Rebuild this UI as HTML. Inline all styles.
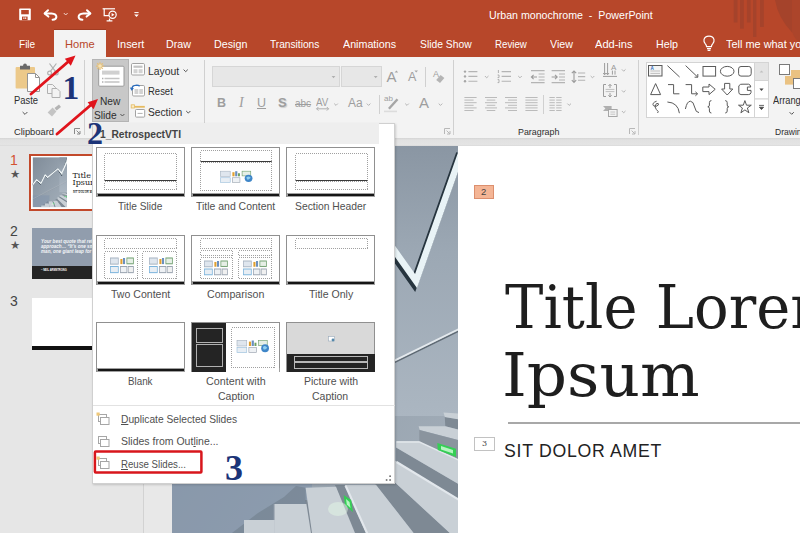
<!DOCTYPE html>
<html>
<head>
<meta charset="utf-8">
<title>Urban monochrome - PowerPoint</title>
<style>
html,body{margin:0;padding:0;}
body{width:800px;height:533px;overflow:hidden;position:relative;background:#e6e6e6;font-family:"Liberation Sans","DejaVu Sans",sans-serif;font-size:11px;color:#444;}
.abs{position:absolute;}
svg{position:absolute;left:0;top:0;overflow:visible;}
.t{position:absolute;white-space:nowrap;line-height:14px;font-size:11px;color:#2e2e2e;transform-origin:0 50%;}
.w{color:#fff;}
.c{text-align:center;}
.num{position:absolute;font-family:"Liberation Serif","DejaVu Serif",serif;font-weight:bold;color:#1c3478;font-size:32px;line-height:32px;white-space:nowrap;}
u{text-decoration:underline;}
</style>
</head>
<body>

<!-- ============ slide editing area ============ -->
<div class="abs" style="left:172px;top:145.500px;width:628px;height:388px;background:#fff;"></div>
<svg width="800" height="533" viewBox="0 0 800 533">
<defs>
<linearGradient id="wall" x1="0" y1="0" x2="1" y2="1"><stop offset="0" stop-color="#7f8b98"/><stop offset="0.5" stop-color="#94a0ac"/><stop offset="1" stop-color="#a4afba"/></linearGradient>
<clipPath id="pc"><rect x="172" y="145.600" width="286" height="388"/></clipPath>
<linearGradient id="wallr" x1="0" y1="0" x2="0" y2="1"><stop offset="0" stop-color="#8a96a3"/><stop offset="0.4" stop-color="#9ca8b4"/><stop offset="1" stop-color="#abb6c1"/></linearGradient>
</defs>
<g clip-path="url(#pc)"><g id="photo">

<!-- wall shading -->
<rect x="172" y="145" width="286" height="388" fill="url(#wall)"/>
<rect x="395" y="145" width="63" height="271" fill="url(#wallr)"/>
<rect x="172" y="440" width="140" height="93" fill="#8194ab" opacity=".55"/>
<!-- V chart line -->
<path d="M166 359 L205 321 L241 349 L276 283 L297 302 L382 233 L416 281 L462 151" stroke="#26343e" stroke-width="8" fill="none" stroke-linejoin="miter" transform="translate(-2 2.500)"/>
<path d="M166 359 L205 321 L241 349 L276 283 L297 302 L382 233 L416 281 L462 151" stroke="#e9f3f6" stroke-width="6.500" fill="none" stroke-linejoin="miter"/>
<!-- handrail -->
<path d="M172 470.500 L459 330" stroke="#5f6a74" stroke-width="1.600" fill="none" transform="translate(0 .8)"/>
<path d="M172 469.500 L459 329" stroke="#e4e9ed" stroke-width="1.900" fill="none"/>
<!-- stairs risers -->
<g fill="#7e8994">
<path d="M444.800 417 L460 419.500 L460 430 L445.300 426.200Z"/>
<path d="M396.100 447.400 L460 484.900 L460 499.900 L396.100 461.200Z"/>
<path d="M360 470 L380 468 L396.100 483.600 L449.800 533 L413.600 533 L376.100 484.900Z"/>
<path d="M334.900 484.900 L344.900 484.900 L366.100 533 L353.700 533Z"/>
<path d="M305 500 L307.500 500 L313 533 L310 533Z"/>

</g>
<path d="M296 486 L305.600 487.700 L305.600 504 L274.800 504 L274.800 520 L244 520 L244 533 L232 533 L258 513 L284 497Z" fill="#6c7986" opacity=".5"/>
<path d="M274.300 504 V533" stroke="#aab3bc" stroke-width="1"/>
<g fill="#c9d0d6">
<path d="M443.500 412.500 L460 413.700 L460 419.500 L444.800 417Z"/>
<path d="M418.600 426.200 L445.300 426.200 L460 430 L460 440.400 L419.800 430Z"/>
<path d="M396.100 441.200 L419.300 441.200 L460 460 L460 484.900 L396.100 447.400Z"/>
<path d="M380 452 L396.100 461.200 L460 499.900 L460 533 L449.800 533 L396.100 483.600 L380 470Z"/>
<path d="M344.900 484.900 L376.100 484.900 L413.600 533 L366.100 533Z"/>
<path d="M305.600 487.700 L336 486.800 L355 533 L312 533Z"/>
<path d="M274.800 504 L306.400 504 L311 533 L274.800 533Z"/>
<path d="M244 520 L274.800 520 L274.800 533 L244 533Z"/>
</g>
<path d="M419.300 430 L460 440.400 L460 460 L419.300 442Z" fill="#8a949e"/>
<g stroke="#e2e7ec" stroke-width="2.200" fill="none">
<path d="M345.500 485.500 L367.500 534"/><path d="M396.500 462 L460 500.500"/><path d="M396.500 442 L419.500 442 L460 460.600" stroke-width="1.400"/>
</g>
<!-- green lights -->
<path d="M437.300 443 L456 448.700 L456 457 L437.800 450Z" fill="#35cf55"/>
<path d="M441 446 L453 450 L453 453.500 L441 449.500Z" fill="#b4f5c0"/>
<path d="M343.700 494.900 L351.200 499.900 L352.900 512.300 L344.900 504.800Z" fill="#35cf55"/>
<path d="M346 499 L349.500 502 L350.500 508 L346.800 504.500Z" fill="#b4f5c0"/>
<ellipse cx="338" cy="509" rx="10" ry="7" fill="#e4f8e6" opacity=".5"/>

</g></g>
</svg>

<!-- ============ left thumbnail panel ============ -->
<div class="abs" style="left:0;top:145.500px;width:143px;height:388px;background:#e6e6e6;"></div>
<div class="abs" style="left:143px;top:145.500px;width:1px;height:388px;background:#d2d2d2;"></div>
<div class="abs" style="left:144px;top:145.500px;width:28px;height:388px;background:#e8e8e8;"></div>

<div class="t" style="left:10px;top:151px;font-size:14px;line-height:18px;color:#d35230;">1</div>
<div class="t" style="left:10px;top:222px;font-size:14px;line-height:18px;color:#444;">2</div>
<div class="t" style="left:10px;top:292px;font-size:14px;line-height:18px;color:#444;">3</div>

<!-- slide 1 thumb -->
<div class="abs" style="left:29px;top:154px;width:70px;height:57px;box-sizing:border-box;border:2px solid #c2492b;background:#fff;"></div>
<svg width="100" height="220" viewBox="0 0 100 220"><defs><clipPath id="pc2"><rect x="32.600" y="157.300" width="34.400" height="50"/></clipPath></defs>
<g clip-path="url(#pc2)"><use href="#photo" transform="translate(32.600 157.300) scale(0.1203 0.1292) translate(-172 -146)"/>
<path d="M32.600 184.800 L36.600 179.900 L40.900 183.500 L45.100 175 L47.600 177.400 L57.900 168.900 L61.600 173.200 L67 161.600" stroke="#f2f7f9" stroke-width="1.100" fill="none"/></g></svg>
<div class="t" style="left:72.500px;top:171.600px;font-family:'DejaVu Serif','Liberation Serif',serif;font-size:8px;line-height:7.600px;color:#222;">Title<br>Ipsum</div>
<div class="abs" style="left:73px;top:190px;width:30px;height:1px;background:#b4b4b4;"></div>
<div class="t" style="left:73px;top:191.400px;font-size:2.600px;line-height:4px;color:#333;letter-spacing:.2px;font-weight:bold;">SIT DOLOR AMET</div>
<!-- slide 2 thumb -->
<div class="abs" style="left:32px;top:228px;width:70px;height:37.500px;background:#919dad;"></div>
<div class="abs" style="left:32px;top:265.500px;width:70px;height:13.500px;background:#242424;"></div>
<div class="t w" style="left:41px;top:240.400px;font-size:4.600px;line-height:4.700px;font-style:italic;font-weight:bold;color:#f4f6f8;">Your best quote that reflects your<br>approach… “It’s one small step for<br>man, one giant leap for mankind.”</div>
<div class="t w" style="left:41px;top:269.400px;font-size:2.600px;line-height:4px;font-weight:bold;color:#fff;">– NEIL ARMSTRONG</div>
<div class="t" style="left:10px;top:167.500px;font-size:11.500px;line-height:12px;color:#555;font-family:'DejaVu Sans',sans-serif;">★</div>
<div class="t" style="left:10px;top:238.500px;font-size:11.500px;line-height:12px;color:#555;font-family:'DejaVu Sans',sans-serif;">★</div>
<!-- slide 3 thumb -->
<div class="abs" style="left:32px;top:298.400px;width:70px;height:48px;background:#fff;"></div>
<div class="abs" style="left:32px;top:346px;width:70px;height:3.600px;background:#111;"></div>

<!-- ============ title bar + tabs ============ -->
<div class="abs" style="left:0;top:0;width:800px;height:56.500px;background:#b7472a;"></div>
<div class="abs" style="left:54px;top:30.200px;width:51.500px;height:27px;background:#f3f3f3;box-shadow:0 -1px 0 rgba(120,40,20,.35);"></div>
<div class="abs" style="left:0;top:56.500px;width:800px;height:81.500px;background:#f3f3f3;"></div>
<div class="abs" style="left:0;top:138px;width:800px;height:7.500px;background:linear-gradient(#d4d4d4,#e1e1e1 25%,#e4e4e4 80%,#dadada);"></div>

<div class="t" id="ttl" style="left:488.8px;top:6.8px;font-size:11px;line-height:16px;color:#fff;transform:scaleX(0.9666);">Urban monochrome &nbsp;-&nbsp; PowerPoint</div>
<div class="t" id="tb1" style="left:18.6px;top:36.0px;font-size:11px;line-height:16px;color:#fff;transform:scaleX(0.9135);">File</div>
<div class="t" id="tb2" style="left:64.8px;top:36.0px;font-size:11px;line-height:16px;color:#b7472a;transform:scaleX(1.0121);">Home</div>
<div class="t" id="tb3" style="left:117.0px;top:36.0px;font-size:11px;line-height:16px;color:#fff;transform:scaleX(0.9958);">Insert</div>
<div class="t" id="tb4" style="left:166.4px;top:36.0px;font-size:11px;line-height:16px;color:#fff;transform:scaleX(0.9738);">Draw</div>
<div class="t" id="tb5" style="left:214.0px;top:36.0px;font-size:11px;line-height:16px;color:#fff;transform:scaleX(0.9752);">Design</div>
<div class="t" id="tb6" style="left:270.1px;top:36.0px;font-size:11px;line-height:16px;color:#fff;transform:scaleX(0.9234);">Transitions</div>
<div class="t" id="tb7" style="left:343.0px;top:36.0px;font-size:11px;line-height:16px;color:#fff;transform:scaleX(0.9739);">Animations</div>
<div class="t" id="tb8" style="left:420.0px;top:36.0px;font-size:11px;line-height:16px;color:#fff;transform:scaleX(0.9374);">Slide Show</div>
<div class="t" id="tb9" style="left:495.2px;top:36.0px;font-size:11px;line-height:16px;color:#fff;transform:scaleX(0.8814);">Review</div>
<div class="t" id="tb10" style="left:549.6px;top:36.0px;font-size:11px;line-height:16px;color:#fff;transform:scaleX(0.9680);">View</div>
<div class="t" id="tb11" style="left:594.8px;top:36.0px;font-size:11px;line-height:16px;color:#fff;transform:scaleX(1.0054);">Add-ins</div>
<div class="t" id="tb12" style="left:655.5px;top:36.0px;font-size:11px;line-height:16px;color:#fff;transform:scaleX(0.9724);">Help</div>
<div class="t" id="tb13" style="left:726.4px;top:36.0px;font-size:11px;line-height:16px;color:#fff;transform:scaleX(0.9928);">Tell me what y<span>ou want to do</span></div>
<!-- ============ ribbon text ============ -->
<div class="abs" style="left:92px;top:59px;width:37px;height:63px;box-sizing:border-box;background:#c8c8c8;border:1px solid #b4b4b4;"></div>

<div class="t" id="r1" style="left:13.7px;top:92.6px;font-size:10.4px;line-height:16px;transform:scaleX(0.9068);">Paste</div>
<div class="t" id="r2" style="left:14.4px;top:124.0px;font-size:9.6px;line-height:16px;transform:scaleX(0.9738);">Clipboard</div>
<div class="t" id="r3" style="left:99.6px;top:93.8px;font-size:10.4px;line-height:16px;transform:scaleX(0.9809);">New</div>
<div class="t" id="r4" style="left:93.7px;top:107.8px;font-size:10.4px;line-height:16px;transform:scaleX(0.9823);">Slide</div>
<div class="t" id="r5" style="left:147.8px;top:63.6px;font-size:10.4px;line-height:16px;transform:scaleX(0.9999);">Layout</div>
<div class="t" id="r6" style="left:147.8px;top:84.2px;font-size:10.4px;line-height:16px;transform:scaleX(0.9132);">Reset</div>
<div class="t" id="r7" style="left:147.8px;top:104.8px;font-size:10.4px;line-height:16px;transform:scaleX(0.9835);">Section</div>
<div class="t" id="r8" style="left:518.2px;top:124.2px;font-size:9.6px;line-height:16px;transform:scaleX(0.9238);">Paragraph</div>
<div class="t" id="r9" style="left:772.7px;top:92.6px;font-size:10.4px;line-height:16px;transform:scaleX(0.8900);">Arrang<span>e</span></div>
<div class="t" id="r10" style="left:774.6px;top:123.8px;font-size:9.6px;line-height:16px;transform:scaleX(0.8900);">Drawin<span>g</span></div>
<!-- font boxes -->
<div class="abs" style="left:212px;top:66px;width:128px;height:21px;box-sizing:border-box;background:#e7e7e7;border:1px solid #d6d6d6;"></div>
<div class="abs" style="left:341px;top:66px;width:41px;height:21px;box-sizing:border-box;background:#e7e7e7;border:1px solid #d6d6d6;"></div>

<!-- font buttons (disabled) -->
<div class="t" style="left:217px;top:96px;font-size:12.5px;font-weight:bold;color:#9e9e9e;">B</div>
<div class="t" style="left:239px;top:96px;font-size:12.5px;font-style:italic;font-family:'Liberation Serif',serif;color:#9e9e9e;font-size:14px;">I</div>
<div class="t" style="left:257px;top:96px;font-size:12.5px;color:#9e9e9e;text-decoration:underline;">U</div>
<div class="t" style="left:278px;top:96px;font-size:13px;font-weight:bold;color:#9e9e9e;text-shadow:1px 1px 1px #ccc;">S</div>
<div class="t" style="left:295px;top:97px;font-size:10px;color:#9e9e9e;text-decoration:line-through;">abc</div>
<div class="t" style="left:316px;top:94.500px;font-size:10.500px;color:#9e9e9e;transform:scaleX(.93);">AV</div>
<div class="t" style="left:348px;top:96px;font-size:12px;color:#9e9e9e;">Aa</div>
<div class="t" style="left:386.500px;top:69.500px;font-size:15px;color:#9e9e9e;">A</div>
<div class="t" style="left:408px;top:70px;font-size:12.5px;color:#9e9e9e;">A</div>
<div class="t" style="left:433px;top:67px;font-size:9px;color:#9e9e9e;">A</div>
<div class="t" style="left:384px;top:92px;font-size:8px;color:#9e9e9e;">ab</div>
<div class="t" style="left:419px;top:96px;font-size:15px;color:#9e9e9e;">A</div>
<div class="t" style="left:611px;top:61px;font-size:8px;color:#999;">A</div>

<!-- ============ ribbon / titlebar icons ============ -->
<svg width="800" height="146" viewBox="0 0 800 146" fill="none">
<!-- title bar decoration -->
<g fill="#a5432b">
<rect x="733.7" y="0" width="3.8" height="22.5"/>
<rect x="740" y="0" width="3.8" height="28.7"/>
<rect x="746.9" y="0" width="3.8" height="22.5"/>
<rect x="753" y="0" width="3.4" height="37"/>
<rect x="760" y="0" width="3.8" height="27"/>
<path d="M775 0 L792.5 0 L792.5 33 Q778 18 775 0Z"/>
</g>
<path d="M792.5 0 H800 V42 Q795 40 792.5 33Z" fill="#ac452b"/>
<!-- save -->
<rect x="19.200" y="8.600" width="11.600" height="11.600" rx=".8" fill="#fff"/>
<rect x="21.200" y="10" width="7.600" height="4.300" fill="#b7472a"/>
<rect x="22" y="16.600" width="5.600" height="3.600" fill="#b7472a"/>
<rect x="23.400" y="17.300" width="1" height="1.700" fill="#fff"/><rect x="25.200" y="17.300" width="1" height="1.700" fill="#fff"/>
<!-- undo -->
<g stroke="#fff" stroke-width="2" stroke-linecap="round" stroke-linejoin="round">
<path d="M48 10.2 L44.6 13.4 L48.4 16.6"/>
<path d="M45 13.4 H51.5 Q56.4 13.6 56.4 17 Q56.2 19.6 52.6 19.8"/>
<path d="M87 10.2 L90.4 13.4 L86.6 16.6"/>
<path d="M90 13.4 H83.5 Q78.6 13.6 78.6 17 Q78.8 19.6 82.4 19.8"/>
</g>
<path d="M63.8 13 L65.7 15 L67.6 13" stroke="#f3d4cb" stroke-width="1"/>
<!-- present from beginning -->
<g stroke="#fff" stroke-width="1.2">
<path d="M102.6 8.8 H115"/>
<path d="M104.2 8.8 V15.6 H109"/>
<path d="M106.6 20.8 H112.4 M109.5 18.6 V20.8"/>
<circle cx="112.6" cy="14.8" r="3.6"/>
</g>
<path d="M111.6 13 L114.4 14.8 L111.6 16.6Z" fill="#fff"/>
<!-- customize qat -->
<path d="M134.4 12.6 H138.6" stroke="#fff" stroke-width="1"/>
<path d="M134.2 14.4 H138.8 L136.5 17Z" fill="#fff"/>
<!-- bulb -->
<g stroke="#fff" stroke-width="1.2">
<path d="M706.6 46.6 Q706.4 45 705.2 43.6 Q703.6 41.6 704 39.6 Q704.8 36.2 709 36.2 Q713.2 36.2 714 39.6 Q714.4 41.6 712.8 43.6 Q711.6 45 711.4 46.6 Z"/>
<path d="M707 48.6 H711 M707.6 50.4 H710.4"/>
</g>

<!-- group separators -->
<g stroke="#d0d0d0" stroke-width="1">
<path d="M84.5 60 V135"/>
<path d="M204.5 60 V135"/>
<path d="M453.5 60 V135"/>
<path d="M638.5 60 V135"/>
<path d="M379.5 95 V114"/>
<path d="M425.5 67 V87"/>
<path d="M543.5 95 V114"/>
</g>

<!-- paste icon -->
<rect x="15.600" y="67" width="19.400" height="21.500" rx="1" fill="#ecc98a"/>
<path d="M20 67.5 V65.8 H23 Q23.2 63.6 25 63.6 Q26.8 63.6 27 65.8 H30 V69.4 H20Z" fill="#6a6a6a"/>
<path d="M27.5 73.5 H35.5 L39.5 77.5 V91.5 H27.5Z" fill="#fff" stroke="#959595" stroke-width="1"/>
<path d="M35.500 73.500 V77.500 H39.500" stroke="#959595" stroke-width="1"/>
<path d="M22.6 112 L25 114.4 L27.4 112" stroke="#555" stroke-width="1"/>
<!-- scissors -->
<g stroke="#b0b0b0" stroke-width="1.2">
<path d="M49.5 63.5 L55.4 71.4 M56.4 63.5 L50.4 71.4"/>
<circle cx="49.6" cy="73" r="1.9"/><circle cx="56.2" cy="73" r="1.9"/>
</g>
<!-- copy -->
<g stroke="#b0b0b0" stroke-width="1" fill="#f3f3f3">
<path d="M47.5 84.5 H52.5 L55.5 87.5 V93.5 H47.5Z"/>
<path d="M52 88.5 H57 L60 91.5 V97.5 H52Z"/>
</g>
<!-- format painter -->
<g fill="#b4b4b4">
<path d="M54.5 108 L59 104.6 L61 107 L56.6 110.6Z"/>
<path d="M47.6 112.4 L52.6 107.6 L56.4 111.6 L52 116.6Z" fill="#c4c4c4"/>
</g>
<!-- launchers -->
<g stroke="#8a8a8a" stroke-width="1">
<path d="M74.5 134 V128.5 H80"/><path d="M76.6 130.6 L80 134 M80 131 V134 H77"/>
</g>
<g stroke="#b8b8b8" stroke-width="1">
<path d="M444.5 134 V128.5 H450"/><path d="M446.6 130.6 L450 134 M450 131 V134 H447"/>
<path d="M629.5 134 V128.5 H635"/><path d="M631.6 130.6 L635 134 M635 131 V134 H632"/>
</g>

<!-- new slide icon -->
<rect x="98.700" y="66.200" width="25.300" height="20" rx="1" fill="#fff" stroke="#9a9a9a"/>
<rect x="102" y="70.600" width="17.500" height="4" fill="#d0d0d0"/>
<path d="M104.500 78.500 H119.500 M104.500 82 H119.500" stroke="#c4c4c4" stroke-width="1.300"/><path d="M102 78.500 H103.400 M102 82 H103.400" stroke="#b0b0b0" stroke-width="1.300"/>
<g stroke="#e6c078" stroke-width="1.300"><path d="M100 62.200 V70 M96 66.100 H104 M97.200 63.300 L102.800 68.900 M102.800 63.300 L97.200 68.900"/></g>
<circle cx="100" cy="66" r="1.8" fill="#f6e3b8"/>
<path d="M120.4 114 L122.4 116 L124.4 114" stroke="#555" stroke-width="1"/>

<!-- layout icon -->
<rect x="131.500" y="63.500" width="13" height="11.500" rx="1.200" fill="#fff" stroke="#a2a2a2"/>
<rect x="133.500" y="65.600" width="9" height="2.200" fill="#c4c4c4"/>
<rect x="133.500" y="69.200" width="4" height="4" fill="#d2d2d2"/><rect x="138.600" y="69.200" width="4" height="4" fill="#d2d2d2"/>
<path d="M183.600 69.600 L185.700 71.700 L187.800 69.600" stroke="#555" stroke-width="1"/>
<!-- reset icon -->
<rect x="132.500" y="85.500" width="12" height="10.500" rx="1.200" fill="#fff" stroke="#a2a2a2"/>
<rect x="134.500" y="89" width="3.800" height="5" fill="#d2d2d2"/><rect x="139.300" y="89" width="3.600" height="5" fill="#d2d2d2"/>
<path d="M131.600 89.600 Q131.800 85.400 136.800 85.200 Q138.600 85.200 139.600 86.200" stroke="#2a6dbf" stroke-width="1.300" fill="none"/>
<path d="M129.800 87.600 L131.600 90.800 L134 88.200Z" fill="#2a6dbf"/>
<!-- section icon -->
<rect x="131.200" y="104.800" width="3.200" height="3.200" fill="#f9ecc8" stroke="#e6bb60" stroke-width=".8"/>
<path d="M134.600 106.800 H144.800" stroke="#e6bb60" stroke-width="1.800"/>
<rect x="135.500" y="109.500" width="9.200" height="7.600" rx=".8" fill="#fff" stroke="#a2a2a2"/>
<path d="M137.600 113.400 H142.600" stroke="#b0b0b0" stroke-width="1"/>
<path d="M186.200 111 L188.300 113.100 L190.400 111" stroke="#555" stroke-width="1"/>

<!-- combo arrows -->
<path d="M331.6 76 H335.4 L333.5 78.2Z M373.8 76 H377.6 L375.7 78.2Z" fill="#b0b0b0"/>
<!-- disabled chevrons -->
<g stroke="#b4b4b4" stroke-width="1">
<path d="M334.2 103.6 L336 105.4 L337.8 103.6"/>
<path d="M366.8 103.6 L368.6 105.4 L370.4 103.6"/>
<path d="M405.2 103.6 L407 105.4 L408.8 103.6"/>
<path d="M438.7 103.6 L440.5 105.4 L442.3 103.6"/>
<path d="M484.9 76 L486.7 77.8 L488.5 76"/>
<path d="M518.2 76 L520 77.8 L521.8 76"/>
<path d="M590.7 76 L592.5 77.8 L594.3 76"/>
<path d="M567.4 103.6 L569.2 105.4 L571 103.6"/>
<path d="M621.9 69.4 L623.7 71.2 L625.5 69.4"/>
<path d="M621.9 90.4 L623.7 92.2 L625.5 90.4"/>
<path d="M621.9 111 L623.7 112.8 L625.5 111"/>
</g>
<!-- AV arrow -->
<path d="M316.600 108.800 H328.600 M318.400 107 L316.600 108.800 L318.400 110.600 M326.800 107 L328.600 108.800 L326.800 110.600" stroke="#b0b0b0" stroke-width="1"/>
<!-- grow/shrink marks -->
<path d="M394.6 72.6 L396.4 70.4 L398.2 72.6Z" fill="#a6a6a6"/>
<path d="M414.4 70.4 L416.2 72.6 L418 70.4Z" fill="#a6a6a6"/>
<!-- clear formatting eraser -->
<path d="M436.2 80 L440.6 75 L444.4 78 L440 83Z" fill="#b4b4b4"/>
<!-- highlighter -->
<path d="M388 108 L396.6 98.4 L398.4 100 L389.8 109.4Z" fill="#a6a6a6"/>
<path d="M384 111.4 H397" stroke="#dcdcdc" stroke-width="1.6"/>

<!-- bullets -->
<g fill="#a6a6a6"><circle cx="465" cy="71.6" r="1.2"/><circle cx="465" cy="76.4" r="1.2"/><circle cx="465" cy="81.2" r="1.2"/></g>
<g stroke="#b4b4b4" stroke-width="1.1">
<path d="M468.4 71.6 H477.4 M468.4 76.4 H477.4 M468.4 81.2 H477.4"/>
<!-- numbering -->
<path d="M501.6 71.6 H511 M501.6 76.4 H511 M501.6 81.2 H511"/>
<path d="M498.4 70 V73 M497.6 75 H499 V77.6 H497.6 M497.6 79.6 H499 V82.6 H497.6" stroke-width=".8" stroke="#a0a0a0"/>
<!-- decrease indent -->
<path d="M531 70.6 H544.6 M538.6 74 H544.6 M538.6 77 H544.6 M538.6 80 H544.6 M531 82.6 H544.6"/>
<path d="M531.4 77 H537 M533.6 74.8 L531.4 77 L533.6 79.2" stroke="#9c9c9c"/>
<!-- increase indent -->
<path d="M551.6 70.6 H565 M559 74 H565 M559 77 H565 M559 80 H565 M551.6 82.6 H565"/>
<path d="M551.6 77 H557.2 M555 74.8 L557.2 77 L555 79.2" stroke="#9c9c9c"/>
<!-- line spacing -->
<path d="M578 73 H585.2 M578 76.6 H585.2 M578 80.2 H585.2"/>
<path d="M574 71 V82.4 M571.8 73.2 L574 71 L576.2 73.2 M571.8 80.2 L574 82.4 L576.2 80.2" stroke="#9c9c9c"/>
<!-- align left/center/right/justify -->
<path stroke-width=".9" d="M464.4 97.5 H476.6 M464.4 100.1 H473.6 M464.4 102.7 H476.6 M464.4 105.3 H473.6 M464.4 107.9 H476.6 M464.4 110.5 H473.6"/>
<path stroke-width=".9" d="M485.0 97.5 H497.0 M486.7 100.1 H495.3 M485.0 102.7 H497.0 M486.7 105.3 H495.3 M485.0 107.9 H497.0 M486.7 110.5 H495.3"/>
<path stroke-width=".9" d="M505.0 97.5 H517.0 M508.0 100.1 H517.0 M505.0 102.7 H517.0 M508.0 105.3 H517.0 M505.0 107.9 H517.0 M508.0 110.5 H517.0"/>
<path stroke-width=".9" d="M525.4 97.5 H537.6 M525.4 100.1 H537.6 M525.4 102.7 H537.6 M525.4 105.3 H537.6 M525.4 107.9 H537.6 M525.4 110.5 H537.6"/>
<!-- columns -->
<path stroke-width=".9" d="M549.4 97.5 H554.8 M549.4 100.1 H554.8 M549.4 102.7 H554.8 M549.4 105.3 H554.8 M549.4 107.9 H554.8 M549.4 110.5 H554.8 M556.2 97.5 H561.6 M556.2 100.1 H561.6 M556.2 102.7 H561.6 M556.2 105.3 H561.6 M556.2 107.9 H561.6 M556.2 110.5 H561.6"/>
</g>
<!-- text direction -->
<g stroke="#9c9c9c" stroke-width="1">
<path d="M604.6 63 V74.6 M607.6 63 V74.6 M603 76.4 H617"/>
<path d="M603.2 73 L604.6 74.8 L606 73 M606.2 73 L607.6 74.8 L609 73"/>
<path d="M612.4 70.6 V74.6 M615 70.6 V74.6"/>
<!-- align text -->
<path d="M606 84.5 H603.5 V96.5 H606 M614 84.5 H616.5 V96.5 H614"/>
<path d="M610 84.4 V88 M608.4 86 L610 84.4 L611.6 86 M610 97 V93 M608.4 95.2 L610 97 L611.6 95.2"/>
<path d="M605.6 89.4 H614.4 M605.6 91.6 H614.4" stroke="#c0c0c0"/>
</g>
<!-- smartart -->
<path d="M603 106 H611.6 V111 H603 L605.4 108.5Z" fill="#b0b0b0"/>
<rect x="608.5" y="109.5" width="8.6" height="7" fill="#f3f3f3" stroke="#a6a6a6"/>
<path d="M610.4 112 H615.2 M610.4 114.2 H615.2" stroke="#c4c4c4" stroke-width="1"/>

<!-- SHAPES GALLERY -->
<rect x="646.5" y="62.5" width="122" height="55" fill="#fff" stroke="#d4d4d4"/>
<rect x="754.5" y="62.5" width="14" height="18" fill="#e4e4e4" stroke="#d4d4d4"/>
<rect x="754.5" y="80.5" width="14" height="18.5" fill="#fff" stroke="#d4d4d4"/>
<rect x="754.5" y="99" width="14" height="18.5" fill="#fff" stroke="#d4d4d4"/>
<path d="M759.6 72.4 L761.5 70.4 L763.4 72.4Z" fill="#c0c0c0"/>
<path d="M759.4 88.6 H763.6 L761.5 91Z" fill="#444"/>
<path d="M759 105.4 H764 M759.4 107.2 H763.6 L761.5 109.6Z" fill="#444" stroke="#444" stroke-width=".8"/>
<g stroke="#5a5a5a" stroke-width="1">
<!-- row1 -->
<rect x="648.5" y="65.5" width="13.5" height="10.5" fill="#f4f4f4"/>
<path d="M650.4 71 H660 M650.4 73.4 H660" stroke="#c0c0c0"/>
<path d="M667.4 65.6 L679.6 77"/>
<path d="M685.6 65.6 L697.6 77 M697.8 74 V77.2 H694.6"/>
<rect x="703" y="66.5" width="12.6" height="9.6"/>
<ellipse cx="727.2" cy="71.3" rx="6.8" ry="4.9"/>
<rect x="738.6" y="66.5" width="12.6" height="9.6" rx="2.4"/>
<!-- row2 -->
<path d="M655.6 83.6 L660.6 94.6 H650.6Z"/>
<path d="M668 84.6 H673.6 V93.8 H679.4"/>
<path d="M685.6 84.6 H691.6 V93.8 H697.4 M695.4 91.8 L697.6 93.8 L695.4 95.8"/>
<path d="M702.8 87 H709 V84 L715.2 89.3 L709 94.6 V91.6 H702.8Z"/>
<path d="M724.6 83.4 H729.8 V89 H732.8 L727.2 95 L721.6 89 H724.6Z"/>
<path d="M738.8 85.8 Q740.4 83.6 743 84.2 H748.6 Q750.6 84.6 750.8 87 H747.4 V90.4 H751 V92.6 Q750.6 94.6 748.4 94.6 H741 Q738.8 94.4 738.8 92.2Z"/>
<!-- row3 -->
<path d="M656.6 101.2 Q651.6 103 653.4 105.6 Q656 107.6 658.4 105 Q659 102.6 656.4 103.6 Q653.4 106.6 656.4 109.6 Q659.4 111.6 657.6 113"/>
<path d="M667.4 102 Q678 102.6 679.4 113.2"/>
<path d="M685.400 109 Q687 101.200 690.400 101.200 Q693.400 101.200 694.600 107 Q695.800 112.800 699 112.600"/>
<path d="M711.4 100.6 Q709.4 100.6 709.4 102.6 V105 Q709.4 106.8 707.8 106.8 Q709.4 106.8 709.4 108.6 V111 Q709.4 113 711.4 113"/>
<path d="M725.2 100.6 Q727.2 100.6 727.2 102.6 V105 Q727.2 106.8 728.8 106.8 Q727.2 106.8 727.2 108.6 V111 Q727.2 113 725.2 113"/>
<path d="M744.9 100.6 L746.5 105.2 H751.3 L747.4 108 L748.9 112.8 L744.9 109.9 L740.9 112.8 L742.4 108 L738.5 105.2 H743.3Z"/>
</g>
<text x="650.6" y="70" font-family="Liberation Sans, sans-serif" font-size="4.6" font-weight="bold" fill="#2a6dbf">A</text>

<!-- arrange icon -->
<rect x="779.5" y="64.500" width="10" height="10" fill="#fff" stroke="#7a7a7a"/>
<rect x="785" y="76" width="8.6" height="8.6" fill="#eac282"/>
<rect x="791" y="70" width="9" height="8" fill="#eac282"/>
<rect x="793.5" y="78.500" width="10" height="10" fill="#fff" stroke="#7a7a7a"/>
<path d="M789.6 112.200 L791.7 114.300 L793.8 112.200" stroke="#555" stroke-width="1"/>
</svg>

<!-- ============ slide text ============ -->
<div class="abs" style="left:474px;top:185px;width:20px;height:14px;box-sizing:border-box;background:#f4b595;border:1px solid #dc8f6e;"></div>
<div class="t" style="left:481px;top:185px;font-size:9.500px;line-height:14px;color:#444;">2</div>
<div class="t" id="big1" style="left:505px;top:273.900px;font-family:'DejaVu Serif','Liberation Serif',serif;font-size:59px;line-height:68px;color:#1e1e1e;transform:scaleX(.976);">Title Lorem</div>
<div class="t" id="big2" style="left:502px;top:341.900px;font-family:'DejaVu Serif','Liberation Serif',serif;font-size:59px;line-height:68px;color:#1e1e1e;transform:scaleX(1.066);">Ipsum</div>
<div class="abs" style="left:508px;top:422px;width:292px;height:2px;background:#a8a8a8;"></div>
<div class="abs" style="left:474px;top:437px;width:21px;height:14px;box-sizing:border-box;background:#fff;border:1px solid #c2c2c2;"></div>
<div class="t" style="left:482px;top:437px;font-size:8px;line-height:14px;color:#444;font-family:'DejaVu Serif',serif;">3</div>
<div class="t" id="s1" style="left:503.6px;top:438.6px;font-size:17.5px;line-height:24px;color:#222;letter-spacing:.7px;transform:scaleX(1.0108);">SIT DOLOR AMET</div>

<!-- ============ dropdown menu ============ -->
<div class="abs" style="left:92px;top:122.500px;width:303.200px;height:361px;box-sizing:border-box;background:#fff;border:1px solid #d0d0d0;box-shadow:1px 1px 2px rgba(0,0,0,.16);"></div>
<div class="abs" style="left:93px;top:123px;width:286px;height:21px;background:#eeeeee;"></div>
<div class="abs" style="left:93px;top:405px;width:302px;height:1px;background:#e2e2e2;"></div>

<svg width="800" height="533" viewBox="0 0 800 533" fill="none">
<defs>
<g id="thumb"><rect x=".5" y=".5" width="88" height="49" fill="#fff" stroke="#909090"/><rect x="1" y="46" width="87" height="3.500" fill="#161616"/></g>
<g id="ico">
<rect x="0" y="0" width="9" height="5" fill="#dfe6ee" stroke="#a8b4c2" stroke-width=".6"/>
<rect x="0" y="6.4" width="9" height="4.600" fill="#e8eef4" stroke="#9cc0dc" stroke-width=".6"/>
<rect x="11" y="1" width="2" height="4" fill="#e0a030"/><rect x="13.6" y="0" width="2" height="5" fill="#6a8fc0"/><rect x="16.200" y="2" width="1.800" height="3" fill="#70a060"/>
<rect x="11" y="6.4" width="7" height="4.600" fill="#eef1f4" stroke="#9aa4b0" stroke-width=".6"/>
<rect x="20" y="0" width="8" height="4.600" fill="#e6efe6" stroke="#70a070" stroke-width=".6"/>
<circle cx="26" cy="7" r="3.600" fill="#3f86c8"/><path d="M24 6 Q26 4 28 6.500 Q26 9 24.500 8Z" fill="#8fd0f0"/>
</g>
<g id="ico2">
<rect x="0" y="0" width="6" height="3.600" fill="#dfe6ee" stroke="#a8b4c2" stroke-width=".6"/>
<rect x="0" y="5" width="6" height="3.600" fill="#e8eef4" stroke="#7cb4dc" stroke-width=".6"/>
<rect x="7.600" y=".6" width="1.600" height="3" fill="#e0a030"/><rect x="9.600" y="0" width="1.600" height="3.600" fill="#6a8fc0"/>
<rect x="7.600" y="5" width="5" height="3.600" fill="#eef1f4" stroke="#9aa4b0" stroke-width=".6"/>
<rect x="12.600" y="0" width="5" height="3.400" fill="#e6efe6" stroke="#70a070" stroke-width=".6"/>
<rect x="13.600" y="5" width="4" height="3.600" fill="#f0f0f0" stroke="#9aa4b0" stroke-width=".6"/>
</g>
</defs>
<g stroke="#a0a0a0" stroke-width="1" stroke-dasharray="1 1" shape-rendering="crispEdges">
<!-- row 1 -->
<use href="#thumb" x="96" y="147" stroke-dasharray="none"/>
<rect x="104.500" y="153.500" width="72" height="27"/>
<rect x="104.500" y="181.500" width="72" height="8"/>
<use href="#thumb" x="191" y="147" stroke-dasharray="none"/>
<rect x="200.500" y="150.500" width="71" height="11"/>
<rect x="200.500" y="162.500" width="71" height="28"/>
<use href="#thumb" x="286" y="147" stroke-dasharray="none"/>
<rect x="295.500" y="153.500" width="72" height="27"/>
<rect x="295.500" y="181.500" width="72" height="8"/>
<!-- row 2 -->
<use href="#thumb" x="96" y="235" stroke-dasharray="none"/>
<rect x="104.500" y="238.500" width="72" height="10"/>
<rect x="104.500" y="251.500" width="33" height="27"/>
<rect x="142.500" y="251.500" width="34" height="27"/>
<use href="#thumb" x="191" y="235" stroke-dasharray="none"/>
<rect x="200.500" y="238.500" width="71" height="10"/>
<rect x="200.500" y="250.500" width="32" height="5"/>
<rect x="238.500" y="250.500" width="33" height="5"/>
<rect x="200.500" y="257.500" width="32" height="21"/>
<rect x="238.500" y="257.500" width="33" height="21"/>
<use href="#thumb" x="286" y="235" stroke-dasharray="none"/>
<rect x="295.500" y="238.500" width="72" height="10"/>
<!-- row 3 -->
<use href="#thumb" x="96" y="322" stroke-dasharray="none"/>
<use href="#thumb" x="191" y="322" stroke-dasharray="none"/>
<rect x="226" y="367" width="53" height="4.500" fill="#fff" stroke="none"/>
<rect x="191.500" y="322.500" width="34" height="49" fill="#242424" stroke="none"/>
<rect x="196.500" y="328.500" width="26" height="14" stroke="#b0b0b0" stroke-dasharray="none"/>
<rect x="196.500" y="344.500" width="26" height="22" stroke="#b0b0b0" stroke-dasharray="none"/>
<rect x="231.500" y="327.500" width="43" height="40"/>
<use href="#thumb" x="286" y="322" stroke-dasharray="none"/>
<rect x="287" y="323" width="87" height="31" fill="#d9d9d9" stroke="none"/>
<rect x="286.500" y="354" width="88" height="18" fill="#242424" stroke="none"/>
<rect x="294.500" y="356.500" width="73" height="5" stroke="#b8b8b8" stroke-dasharray="none"/>
<rect x="294.500" y="362.500" width="73" height="6" stroke="#b8b8b8" stroke-dasharray="none"/>
</g>
<!-- title underline solid lines -->
<g stroke="#3a3a3a" stroke-width="1">
<path d="M104.500 180.500 H176.500 M200.500 161.500 H271.500 M295.500 180.500 H367.500"/>
</g>
<g transform="translate(220.500 171.200) scale(1.08 1.02)"><use href="#ico"/></g>
<g transform="translate(110.500 258) scale(1.3 1.7)"><use href="#ico2"/></g>
<g transform="translate(149.500 258) scale(1.3 1.7)"><use href="#ico2"/></g>
<g transform="translate(204.500 261) scale(1.3 1.6)"><use href="#ico2"/></g>
<g transform="translate(243.500 261) scale(1.3 1.6)"><use href="#ico2"/></g>
<g transform="translate(237 340.500) scale(1.08 1.1)"><use href="#ico"/></g>
<rect x="328.500" y="336.500" width="6" height="4.500" fill="#fff" stroke="#9ab" stroke-width=".6"/>
<circle cx="333" cy="340" r="1.400" fill="#58a"/>

<!-- menu item icons -->
<g stroke="#a6a6a6" stroke-width="1" fill="#fff">
<rect x="98.500" y="414.500" width="8" height="7"/><rect x="100.500" y="417.500" width="8.500" height="7"/>
<rect x="98.500" y="436.500" width="8" height="7"/><rect x="100.500" y="439.500" width="8.500" height="7"/>
<rect x="98.500" y="458.500" width="8" height="7"/><rect x="100.500" y="461.500" width="8.500" height="7"/>
</g>
<g fill="#f0c878">
<rect x="96.500" y="412.500" width="3.200" height="3.200"/><rect x="96.500" y="456.500" width="3.200" height="3.200"/>
</g>
<!-- resize grip -->
<g fill="#6a6a6a"><rect x="389.300" y="475.400" width="1.600" height="1.600"/><rect x="385.800" y="479.200" width="1.600" height="1.600"/><rect x="389.300" y="479.200" width="1.600" height="1.600"/></g>
<!-- red highlight -->
<rect x="94.900" y="451.400" width="106.500" height="21.200" rx=".8" stroke="#d8161c" stroke-width="2.500"/>
</svg>

<div class="t" id="m0" style="left:100.4px;top:126.0px;font-size:11px;line-height:16px;font-weight:bold;color:#444;transform:scaleX(0.9330);">1_RetrospectVTI</div>
<div class="t" id="m1" style="left:118.0px;top:198.2px;font-size:11px;line-height:16px;color:#505050;transform:scaleX(0.9250);">Title Slide</div>
<div class="t" id="m2" style="left:195.8px;top:198.2px;font-size:11px;line-height:16px;color:#505050;transform:scaleX(0.9499);">Title and Content</div>
<div class="t" id="m3" style="left:295.2px;top:198.2px;font-size:11px;line-height:16px;color:#505050;transform:scaleX(0.9403);">Section Header</div>
<div class="t" id="m4" style="left:110.6px;top:286.0px;font-size:11px;line-height:16px;color:#505050;transform:scaleX(0.9601);">Two Content</div>
<div class="t" id="m5" style="left:207.0px;top:286.0px;font-size:11px;line-height:16px;color:#505050;transform:scaleX(0.9661);">Comparison</div>
<div class="t" id="m6" style="left:309.0px;top:286.0px;font-size:11px;line-height:16px;color:#505050;transform:scaleX(0.9599);">Title Only</div>
<div class="t" id="m7" style="left:128.2px;top:373.0px;font-size:11px;line-height:16px;color:#505050;transform:scaleX(0.8899);">Blank</div>
<div class="t" id="m8" style="left:205.8px;top:373.0px;font-size:11px;line-height:16px;color:#505050;transform:scaleX(0.9762);">Content with</div>
<div class="t" id="m9" style="left:217.5px;top:387.8px;font-size:11px;line-height:16px;color:#505050;transform:scaleX(0.9572);">Caption</div>
<div class="t" id="m10" style="left:303.7px;top:373.0px;font-size:11px;line-height:16px;color:#505050;transform:scaleX(0.9532);">Picture with</div>
<div class="t" id="m11" style="left:312.3px;top:387.8px;font-size:11px;line-height:16px;color:#505050;transform:scaleX(0.9546);">Caption</div>
<div class="t" id="m12" style="left:121.0px;top:411.0px;font-size:11px;line-height:16px;color:#505050;transform:scaleX(0.9299);"><u>D</u>uplicate Selected Slides</div>
<div class="t" id="m13" style="left:121.0px;top:433.0px;font-size:11px;line-height:16px;color:#505050;transform:scaleX(0.9547);">Slides from Out<u>l</u>ine...</div>
<div class="t" id="m14" style="left:121.0px;top:455.5px;font-size:11px;line-height:16px;color:#505050;transform:scaleX(0.8784);"><u>R</u>euse Slides...</div>
<!-- ============ annotations ============ -->
<div class="num" style="left:62.500px;top:72px;font-size:33.500px;">1</div>
<div class="num" style="left:87px;top:117px;">2</div>
<div class="num" style="left:225px;top:450px;font-size:36px;line-height:36px;">3</div>
<svg width="800" height="533" viewBox="0 0 800 533">
<g stroke="#e0141c" stroke-width="2.900" fill="#e0141c" stroke-linecap="round">
<path d="M31 94 L69 61"/>
<path d="M75.500 55.500 L70.800 65.800 L64.800 58.800Z" stroke="none"/>
<path d="M57 134 L92 104"/>
<path d="M98 99 L93.600 109.200 L87.600 102.200Z" stroke="none"/>
</g>
</svg>
</body>
</html>
